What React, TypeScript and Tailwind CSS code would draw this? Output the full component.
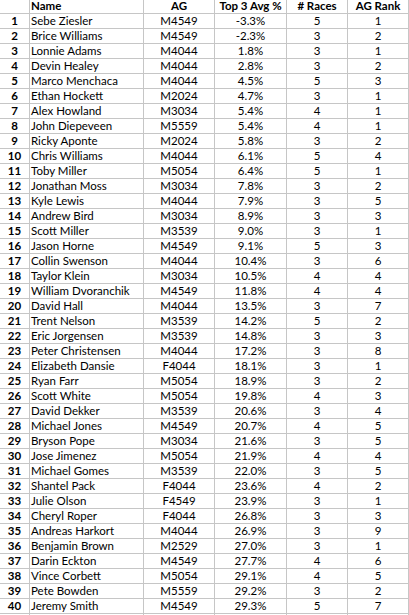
import React from 'react'

type Row = [string, string, string, number, number]

const rows: Row[] = [
  ['Sebe Ziesler', 'M4549', '-3.3%', 5, 1],
  ['Brice Williams', 'M4549', '-2.3%', 3, 2],
  ['Lonnie Adams', 'M4044', '1.8%', 3, 1],
  ['Devin Healey', 'M4044', '2.8%', 3, 2],
  ['Marco Menchaca', 'M4044', '4.5%', 5, 3],
  ['Ethan Hockett', 'M2024', '4.7%', 3, 1],
  ['Alex Howland', 'M3034', '5.4%', 4, 1],
  ['John Diepeveen', 'M5559', '5.4%', 4, 1],
  ['Ricky Aponte', 'M2024', '5.8%', 3, 2],
  ['Chris Williams', 'M4044', '6.1%', 5, 4],
  ['Toby Miller', 'M5054', '6.4%', 5, 1],
  ['Jonathan Moss', 'M3034', '7.8%', 3, 2],
  ['Kyle Lewis', 'M4044', '7.9%', 3, 5],
  ['Andrew Bird', 'M3034', '8.9%', 3, 3],
  ['Scott Miller', 'M3539', '9.0%', 3, 1],
  ['Jason Horne', 'M4549', '9.1%', 5, 3],
  ['Collin Swenson', 'M4044', '10.4%', 3, 6],
  ['Taylor Klein', 'M3034', '10.5%', 4, 4],
  ['William Dvoranchik', 'M4549', '11.8%', 4, 4],
  ['David Hall', 'M4044', '13.5%', 3, 7],
  ['Trent Nelson', 'M3539', '14.2%', 5, 2],
  ['Eric Jorgensen', 'M3539', '14.8%', 3, 3],
  ['Peter Christensen', 'M4044', '17.2%', 3, 8],
  ['Elizabeth Dansie', 'F4044', '18.1%', 3, 1],
  ['Ryan Farr', 'M5054', '18.9%', 3, 2],
  ['Scott White', 'M5054', '19.8%', 4, 3],
  ['David Dekker', 'M3539', '20.6%', 3, 4],
  ['Michael Jones', 'M4549', '20.7%', 4, 5],
  ['Bryson Pope', 'M3034', '21.6%', 3, 5],
  ['Jose Jimenez', 'M5054', '21.9%', 4, 4],
  ['Michael Gomes', 'M3539', '22.0%', 3, 5],
  ['Shantel Pack', 'F4044', '23.6%', 4, 2],
  ['Julie Olson', 'F4549', '23.9%', 3, 1],
  ['Cheryl Roper', 'F4044', '26.8%', 3, 3],
  ['Andreas Harkort', 'M4044', '26.9%', 3, 9],
  ['Benjamin Brown', 'M2529', '27.0%', 3, 1],
  ['Darin Eckton', 'M4549', '27.7%', 4, 6],
  ['Vince Corbett', 'M5054', '29.1%', 4, 5],
  ['Pete Bowden', 'M5559', '29.2%', 3, 2],
  ['Jeremy Smith', 'M4549', '29.3%', 5, 7],
]

const cell = 'border-r border-b border-[#c6c6c6] whitespace-nowrap overflow-hidden'

export default function App() {
  return (
    <div className="h-[615px] w-[409px] overflow-hidden bg-white font-['Lato',sans-serif] text-[11.5px] text-black">
      <div className="grid grid-cols-[30px_114px_71px_72px_61px_61px]">
        <div className={`${cell} h-[14px]`} />
        <div className={`${cell} h-[14px] pl-[1px] font-bold leading-[12px]`}>Name</div>
        <div className={`${cell} h-[14px] text-center font-bold leading-[12px]`}>AG</div>
        <div className={`${cell} h-[14px] text-center font-bold leading-[12px]`}>Top 3 Avg %</div>
        <div className={`${cell} h-[14px] text-center font-bold leading-[12px]`}># Races</div>
        <div className={`${cell} h-[14px] text-center font-bold leading-[12px]`}>AG Rank</div>

        {rows.map(([name, ag, avg, races, rank], i) => (
          <React.Fragment key={i}>
            <div className={`${cell} h-[15px] text-center font-bold leading-[14px]`}>{i + 1}</div>
            <div className={`${cell} h-[15px] pl-[1px] leading-[14px]`}>{name}</div>
            <div className={`${cell} h-[15px] text-center leading-[14px]`}>{ag}</div>
            <div className={`${cell} h-[15px] text-center leading-[14px]`}>{avg}</div>
            <div className={`${cell} h-[15px] text-center leading-[14px]`}>{races}</div>
            <div className={`${cell} h-[15px] text-center leading-[14px]`}>{rank}</div>
          </React.Fragment>
        ))}

        <div className={`${cell} h-[15px]`} />
        <div className={`${cell} h-[15px]`} />
        <div className={`${cell} h-[15px]`} />
        <div className={`${cell} h-[15px]`} />
        <div className={`${cell} h-[15px]`} />
        <div className={`${cell} h-[15px]`} />
      </div>
    </div>
  )
}
